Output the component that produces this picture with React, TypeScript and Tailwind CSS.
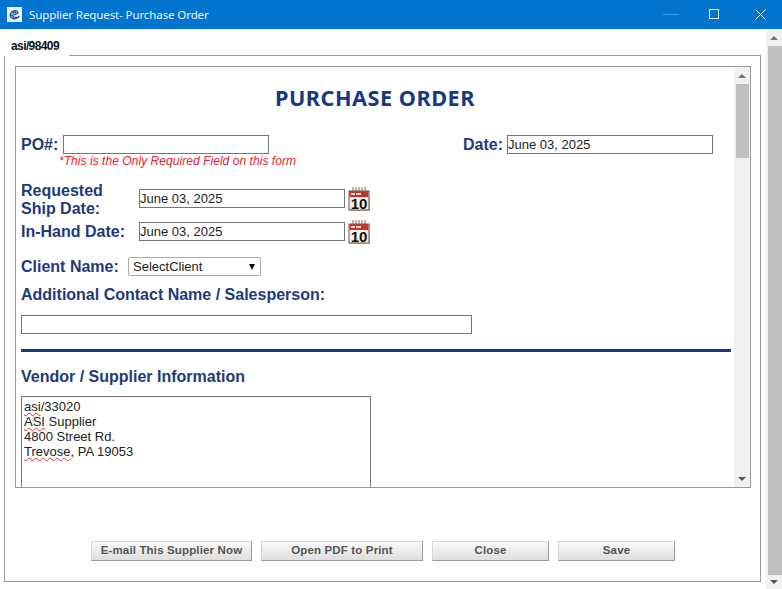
const Calendar = () => (
  <svg width="22" height="25" viewBox="0 0 22 25" className="ml-[3px] shrink-0">
    <rect x="1" y="5" width="20" height="19" fill="#f6f1e8" stroke="#6a5648" />
    <rect x="1.5" y="5" width="19" height="6" fill="#c9302c" />
    <path d="M5 1v5M8 1v5M11 1v5M14 1v5M17 1v5" stroke="#7a6a5a" strokeWidth="1" />
    <path d="M3 8h4M8 8h5" stroke="#f6d8d0" strokeWidth="2" />
    <path d="M20 11h1.5v13.5H2v-.8" stroke="#9a8a7a" fill="none" />
    <text x="11" y="23" textAnchor="middle" fontSize="15" fontWeight="700" fill="#111" fontFamily="Liberation Sans">10</text>
  </svg>
);

const Up = () => <div className="w-0 h-0 border-x-[4px] border-x-transparent border-b-[4px] border-b-[#777]" />;
const Down = () => <div className="w-0 h-0 border-x-[4px] border-x-transparent border-t-[4px] border-t-[#555]" />;

const labelCls = "font-bold text-[16px] leading-[18px] text-[#1f3a7a]";
const inputCls = "border border-[#767676] h-[19px] w-[206px] text-[13px] leading-[17px] text-[#222] bg-white";
const btnCls = "h-[20px] border border-[#d8d8d8] border-r-[#999] border-b-[#999] bg-gradient-to-b from-[#f9f9f9] to-[#dedede] text-[11.5px] font-bold text-[#555] tracking-[0.15px] leading-none flex items-center justify-center";

const Sq = ({ children }: { children: string }) => (
  <span className="underline decoration-wavy decoration-[#e03030] decoration-1 underline-offset-1">{children}</span>
);

export default function App() {
  return (
    <div className="w-[782px] h-[589px] bg-white flex flex-col overflow-hidden font-['Liberation_Sans',sans-serif]">
      <div className="h-[29px] shrink-0 bg-[#0174d0] flex items-center text-white">
        <svg width="15" height="15" viewBox="0 0 15 15" className="ml-[7px] mb-px">
          <rect width="15" height="15" fill="#f2f6fb" />
          <path d="M3 8.2 C5 8.6 9 7.4 11 5.8 C10.4 3.4 6.8 2.8 4.6 5 C2.4 7.2 3 11 6 11.6 C8 12 10.6 11.2 12.4 9.6 C10.6 10.4 8 10.8 6.6 10 C5.4 9.2 5.2 8.4 5.4 8 M5.6 6.6 C6.6 5.2 8.2 4.8 9 5.8" stroke="#1b4f9c" strokeWidth="1.4" fill="none" />
        </svg>
        <span className="ml-[7px] text-[11.5px] tracking-[-0.1px] font-['Noto_Sans',sans-serif] text-[#e8f2fb]">Supplier Request- Purchase Order</span>
        <div className="ml-auto flex items-center mb-px">
          <div className="w-[16px] h-px bg-[#3c9ae6] mr-[30px]" />
          <div className="w-[10px] h-[10px] border border-[#e6f1fb] mr-[36px]" />
          <svg width="11" height="11" viewBox="0 0 11 11" className="mr-[16px]">
            <path d="M0.5 0.5l10 10M10.5 0.5l-10 10" stroke="#eef6fd" strokeWidth="1" />
          </svg>
        </div>
      </div>

      <div className="flex-1 flex min-h-0">
        <div className="w-[761px] shrink-0 flex flex-col pl-[4px] pb-[7px]">
          <div className="h-[27px] shrink-0 flex">
            <div className="w-[65px] shrink-0 pl-[7px] pt-[10px] text-[12px] leading-[14px] font-bold text-[#111] tracking-[-0.6px]">asi/98409</div>
            <div className="flex-1 border-b border-[#999]" />
          </div>
          <div className="flex-1 border border-t-0 border-[#999] flex flex-col pl-[10px] pr-[9px] min-h-0">
            <div className="mt-[10px] h-[422px] shrink-0 border border-[#999] flex overflow-hidden">
              <div className="flex-1 pl-[5px] min-w-0">
                <h1 className="mt-[17px] pr-[5px] text-center text-[21.7px] leading-[28px] font-bold text-[#17397f] tracking-[0.5px] font-['Noto_Sans',sans-serif]">PURCHASE ORDER</h1>
                <div className="mt-[23px] flex items-center">
                  <span className={`${labelCls} w-[42px]`}>PO#:</span>
                  <div className={inputCls} />
                  <span className={`${labelCls} ml-[194px] w-[44px]`}>Date:</span>
                  <div className={inputCls}>June 03, 2025</div>
                </div>
                <div className="ml-[38px] text-[12px] leading-[14px] italic text-[#e8202f] tracking-[0.05px]">*This is the Only Required Field on this form</div>
                <div className="mt-[10px] flex items-center">
                  <span className={`${labelCls} w-[118px] pt-[4px]`}>Requested<br />Ship Date:</span>
                  <div className={inputCls}>June 03, 2025</div>
                  <Calendar />
                </div>
                <div className="mt-[1px] flex items-center">
                  <span className={`${labelCls} w-[118px]`}>In-Hand Date:</span>
                  <div className={inputCls}>June 03, 2025</div>
                  <Calendar />
                </div>
                <div className="mt-[13px] flex items-center">
                  <span className={`${labelCls} w-[107px]`}>Client Name:</span>
                  <div className="w-[133px] h-[19px] border border-[#aaa] rounded-[2px] flex items-center justify-between pl-[4px] pr-[5px] text-[13px] text-[#222]">
                    <span>SelectClient</span>
                    <div className="w-0 h-0 border-x-[3.5px] border-x-transparent border-t-[6px] border-t-[#111]" />
                  </div>
                </div>
                <div className={`${labelCls} mt-[10px]`}>Additional Contact Name / Salesperson:</div>
                <div className={`${inputCls} w-[451px] mt-[11px]`} />
                <div className="mt-[15px] w-[710px] h-[3px] bg-[#17397f]" />
                <div className={`${labelCls} mt-[16px]`}>Vendor / Supplier Information</div>
                <div className="mt-[10px] w-[350px] h-[120px] border border-[#767676] pl-[2px] pt-[2px] text-[13px] leading-[15px] text-[#222]">
                  <div><Sq>asi</Sq>/33020</div>
                  <div><Sq>ASI</Sq> Supplier</div>
                  <div>4800 Street Rd.</div>
                  <div><Sq>Trevose</Sq>, PA 19053</div>
                </div>
              </div>
              <div className="w-[16px] shrink-0 bg-[#f1f1f1] flex flex-col items-center">
                <div className="h-[17px] flex items-center justify-center"><Up /></div>
                <div className="w-[13px] h-[74px] bg-[#c0c0c0]" />
                <div className="flex-1" />
                <div className="h-[17px] flex items-center justify-center"><Down /></div>
              </div>
            </div>
            <div className="mt-[53px] flex gap-[9px] pl-[76px]">
              <button className={`${btnCls} w-[161px]`}>E-mail This Supplier Now</button>
              <button className={`${btnCls} w-[162px]`}>Open PDF to Print</button>
              <button className={`${btnCls} w-[117px]`}>Close</button>
              <button className={`${btnCls} w-[117px]`}>Save</button>
            </div>
          </div>
        </div>
        <div className="ml-[5px] w-[16px] bg-[#f1f1f1] flex flex-col items-center">
          <div className="h-[17px] flex items-center justify-center"><Up /></div>
          <div className="w-[14px] flex-1 bg-[#c0c0c0] ml-px" />
          <div className="h-[14px] flex items-center justify-center"><Down /></div>
        </div>
      </div>
    </div>
  );
}
